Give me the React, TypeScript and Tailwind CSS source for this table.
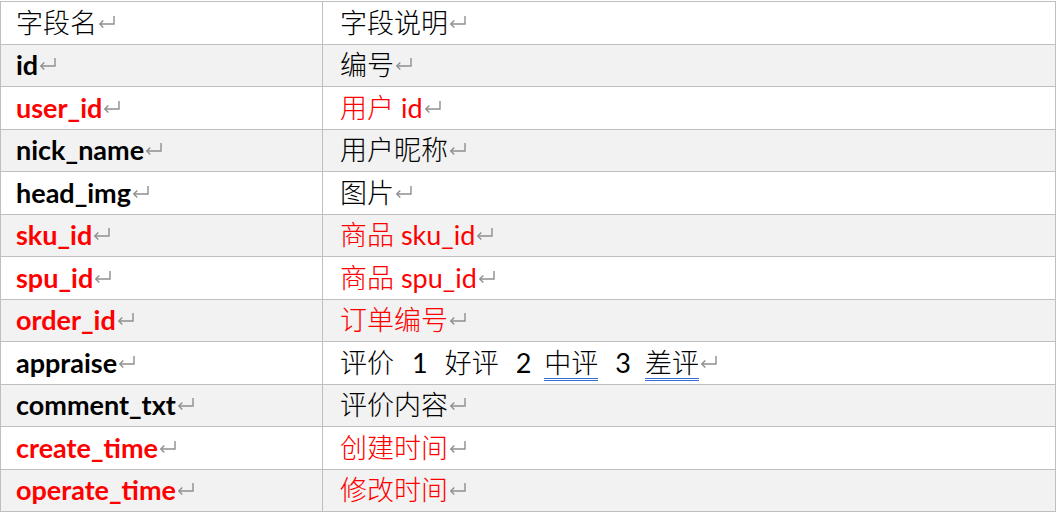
import React from 'react';

// Field dictionary table, rendered like a Word table with paragraph marks

interface Row {
  name: string;
  desc?: string;
  red?: boolean;
  header?: boolean;
  appraise?: boolean;
}

const rows: Row[] = [
  { name: '字段名', desc: '字段说明', header: true },
  { name: 'id', desc: '编号' },
  { name: 'user_id', desc: '用户 id', red: true },
  { name: 'nick_name', desc: '用户昵称' },
  { name: 'head_img', desc: '图片' },
  { name: 'sku_id', desc: '商品 sku_id', red: true },
  { name: 'spu_id', desc: '商品 spu_id', red: true },
  { name: 'order_id', desc: '订单编号', red: true },
  { name: 'appraise', appraise: true },
  { name: 'comment_txt', desc: '评价内容' },
  { name: 'create_time', desc: '创建时间', red: true },
  { name: 'operate_time', desc: '修改时间', red: true },
];

const ReturnMark = () => (
  <svg className="ml-[1px] -translate-y-[1px] shrink-0 self-center" width="18" height="12" viewBox="0 0 18 12" fill="none">
    <path d="M16 0 V8 H1.8" stroke="#8f8f8f" strokeWidth="1.4" />
    <path d="M5.3 4.5 L1.8 8 L5.3 11.5" stroke="#8f8f8f" strokeWidth="1.4" />
  </svg>
);

// CJK glyphs in light weight, latin runs in regular, like the Word document
const Mixed = ({ text }: { text: string }) => (
  <span>
    {text.split(/([\u4e00-\u9fff]+)/).filter(Boolean).map((part, i) => (
      <span key={i} className={/[\u4e00-\u9fff]/.test(part) ? 'font-light' : 'font-normal whitespace-pre'}>
        {part}
      </span>
    ))}
  </span>
);

const ul = 'inline-block leading-[27px] pb-[2px] border-b-[3px] border-double border-[#3a6dd0]';

const Appraise = () => (
  <span className="flex items-baseline">
    <span className="font-light">评价</span>
    <span className="ml-[18px] font-normal">1</span>
    <span className="ml-[17px] font-light">好评</span>
    <span className="ml-[17px] font-normal">2</span>
    <span className={`ml-[13px] font-light ${ul}`}>中评</span>
    <span className="ml-[17px] font-normal">3</span>
    <span className={`ml-[14px] font-light ${ul}`}>差评</span>
  </span>
);

export default function App() {
  return (
    <div className="w-[1057px] h-[513px] bg-white pt-px">
      <div className="w-[1056px] border-t border-l border-r border-[#bfbfbf] font-['Lato','Noto_Sans_CJK_SC',sans-serif] text-[27px] text-black">
        {rows.map((row, i) => (
          <div
            key={row.name}
            className={`flex h-[42.5px] border-b border-[#bfbfbf] ${i % 2 === 1 ? 'bg-[#f2f2f2]' : 'bg-white'}`}
          >
            <div
              className={`w-[322px] shrink-0 border-r border-[#bfbfbf] pl-[15px] flex items-center ${
                row.header ? 'font-light' : 'font-bold'
              } ${row.red ? 'text-[#ff0000]' : ''}`}
            >
              <span>{row.name}</span>
              <ReturnMark />
            </div>
            <div className={`flex-1 pl-[17px] flex items-center ${row.red ? 'text-[#ff0000]' : ''}`}>
              {row.appraise ? <Appraise /> : <Mixed text={row.desc ?? ''} />}
              <ReturnMark />
            </div>
          </div>
        ))}
      </div>
    </div>
  );
}
